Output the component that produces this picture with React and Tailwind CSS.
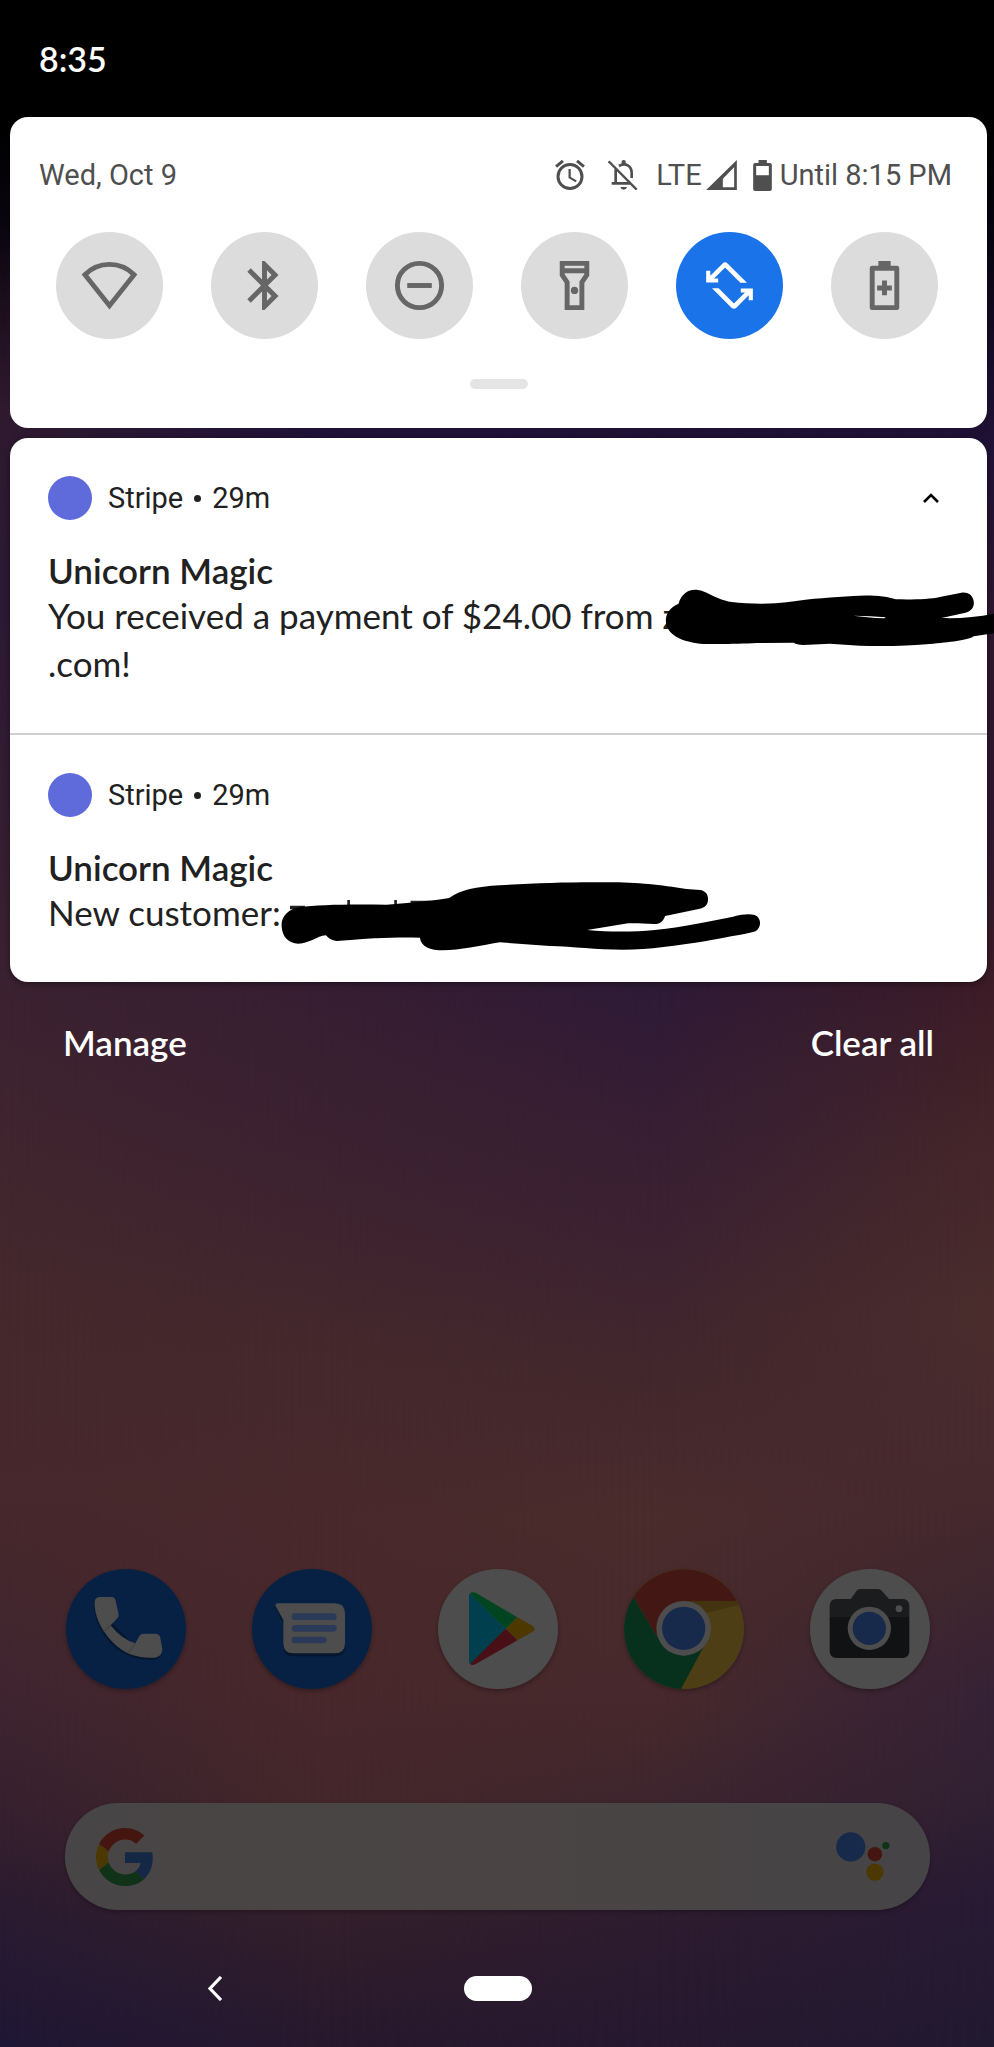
import React from "react";

const sans = "font-['Lato','Open_Sans',sans-serif]";

function Wallpaper() {
  return (
    <div aria-hidden="true" className="absolute inset-0 -z-10 bg-black">
      <div className="absolute inset-0 bg-[linear-gradient(to_bottom,#000_6%,#0a0610_11%,#1d0f1e_15%,#2f1a2f_20%,#2c1a34_29%,#321d32_38%,#3c2230_49%,#44282d_63%,#47292c_73%,#402530_82%,#37212e_88%,#2b1b30_93%,#1e1735_100%)]" />
      <div className="absolute inset-0 bg-[linear-gradient(to_bottom,#000_6%,#0a0612_11%,#1a0f24_15%,#1f1138_21%,#281636_38%,#371e32_49%,#3f242f_60%,#45292c_67%,#49292b_74%,#48282b_83%,#44272a_88%,#34202b_93%,#27182d_100%)] [mask-image:linear-gradient(to_right,transparent,black_33%)]" />
      <div className="absolute inset-0 bg-[linear-gradient(to_bottom,#000_6%,#0a0612_11%,#1a0f24_15%,#1f1136_21%,#26153a_38%,#2f1b36_49%,#3a2032_58%,#42272d_67%,#4a2c2c_74%,#47292c_83%,#3e252e_88%,#2e1c2f_93%,#26182f_100%)] [mask-image:linear-gradient(to_right,transparent_33%,black_66%)]" />
      <div className="absolute inset-0 bg-[linear-gradient(to_bottom,#000_6%,#05030c_11%,#150b26_17%,#201236_22%,#2f182c_32%,#2e182f_40%,#3c1b26_48%,#44262a_56%,#4a2d2c_64%,#46292e_73%,#3e262f_78%,#352236_83%,#302032_88%,#281a33_93%,#211a30_100%)] [mask-image:linear-gradient(to_right,transparent_66%,black)]" />
    </div>
  );
}

function AlarmIcon() {
  return (
    <svg viewBox="0 0 24 24" className="size-9" fill="currentColor" aria-hidden="true">
      <path d="M12.5 8H11v6l4.75 2.85.75-1.23-4-2.37V8zm4.84-6.19 4.6 3.85-1.28 1.53-4.6-3.84zm-10.68 0 1.29 1.54L3.34 7.19 2.06 5.65zM12 4a9 9 0 1 0 0 18 9 9 0 0 0 0-18zm0 16a7 7 0 1 1 0-14 7 7 0 0 1 0 14z" />
    </svg>
  );
}

function BellOffIcon() {
  return (
    <svg viewBox="0 0 90 90" className="size-[30px]" aria-hidden="true">
      <g fill="none" stroke="currentColor" strokeWidth="8">
        <path d="M2 4 86 89" strokeWidth="7" />
        <path d="M23 28V70M11 70H67" />
        <path d="M33 18C52 6 71 18 71 38V54" />
      </g>
      <path d="M41 3q6-6 12 0v10H41zM37 81H57q-2 8-10 8t-10-8z" fill="currentColor" />
    </svg>
  );
}

function SignalIcon() {
  return (
    <svg viewBox="0 0 92 90" className="h-[30px] w-[31px]" aria-hidden="true">
      <path fillRule="evenodd" fill="currentColor" d="M0 90 92 0V90ZM50 82H84V22L50 56Z" />
    </svg>
  );
}

function BatteryIcon() {
  return (
    <svg viewBox="0 0 56 93" className="h-[31px] w-[19px]" aria-hidden="true">
      <path
        fillRule="evenodd"
        fill="currentColor"
        d="M16 0H41V9H50Q56 9 56 15V87Q56 93 50 93H6Q0 93 0 87V15Q0 9 6 9H16ZM9 18V46H47V18Z"
      />
    </svg>
  );
}

const rotateHalf =
  "M2.5 6H4.2V8L9.2 3Q10.2 2.1 11.2 3L19.1 10.9H16.4L10.2 4.7 5.7 9.2H7.4V10.8H2.5Z";

const tileIcons = {
  wifi: (
    <path
      d="M2 7.6A14 14 0 0 1 22 7.6L12 20.2Z"
      fill="none"
      stroke="currentColor"
      strokeWidth="2"
    />
  ),
  bluetooth: (
    <path d="M17.71 7.71 12 2h-1v7.59L6.41 5 5 6.41 10.59 12 5 17.59 6.41 19 11 14.41V22h1l5.71-5.71-4.3-4.29 4.3-4.29zM13 5.83l1.88 1.88L13 9.59V5.83zm1.88 10.46L13 18.17v-3.76l1.88 1.88z" />
  ),
  dnd: (
    <g fill="none" stroke="currentColor" strokeWidth="2">
      <circle cx="12" cy="12" r="9" />
      <path d="M7 12H17" />
    </g>
  ),
  flashlight: (
    <>
      <path d="M18 2H6v6l2 3v11h8V11l2-3V2zm-2 2v1H8V4h8zm-2 6.4V20h-4v-9.6L8 7.39V7h8v.39l-2 3.01z" />
      <circle cx="12" cy="14" r="1.5" />
    </>
  ),
  rotate: (
    <>
      <path d={rotateHalf} />
      <path transform="rotate(180 12 12)" d={rotateHalf} />
    </>
  ),
  battery: (
    <>
      <path
        fillRule="evenodd"
        d="M9.500 2H14.500V4H17Q18 4 18 5V21Q18 22 17 22H7Q6 22 6 21V5Q6 4 7 4H9.500ZM8 6V20H16V6Z"
      />
      <path d="M11 10H13V12H15V14H13V16H11V14H9V12H11Z" />
    </>
  ),
};

const tiles = [
  { id: "wifi", label: "Wi-Fi" },
  { id: "bluetooth", label: "Bluetooth" },
  { id: "dnd", label: "Do not disturb" },
  { id: "flashlight", label: "Flashlight" },
  { id: "rotate", label: "Auto-rotate", on: true },
  { id: "battery", label: "Battery saver" },
];

function QuickSettings() {
  return (
    <section className="rounded-[18px] bg-white pt-10 pb-[39px] text-[#4f4f4f]">
      <div className="flex h-9 items-center justify-between pr-[35px] pl-[29px] font-['Roboto',sans-serif] text-[29px] leading-9">
        <span>Wed, Oct 9</span>
        <div className="flex items-center">
          <AlarmIcon />
          <span className="ml-5"><BellOffIcon /></span>
          <span className="ml-[18px]">LTE</span>
          <span className="ml-1"><SignalIcon /></span>
          <span className="ml-4"><BatteryIcon /></span>
          <span className="ml-2">Until 8:15 PM</span>
        </div>
      </div>
      <div className="mt-[39px] flex justify-between pr-[49px] pl-[46px]">
        {tiles.map((t) => (
          <button
            key={t.id}
            type="button"
            aria-label={t.label}
            aria-pressed={!!t.on}
            className={
              t.on
                ? "flex size-[107px] items-center justify-center rounded-full bg-[#1a73e8] text-white"
                : "flex size-[107px] items-center justify-center rounded-full bg-[#dcdcdc] text-[#666]"
            }
          >
            <svg viewBox="0 0 24 24" className="size-[59px]" fill="currentColor" aria-hidden="true">
              {tileIcons[t.id]}
            </svg>
          </button>
        ))}
      </div>
      <div className="mx-auto mt-10 h-[10px] w-[58px] rounded-full bg-[#e4e4e4]" />
    </section>
  );
}

function Notification({ title, children, expandable }) {
  return (
    <article className="relative pt-[38px] pr-[48px] pb-[46px] pl-[38px] text-[#212121]">
      <header className="flex h-11 items-center font-['Roboto',sans-serif] text-[29px] leading-9">
        <span className="size-11 rounded-full bg-[#5f6bdb]" />
        <span className="ml-4">Stripe</span>
        <span className="mx-[11px] size-[7px] rounded-full bg-[#212121]" />
        <span>29m</span>
        {expandable && (
          <button type="button" aria-label="Collapse" className="ml-auto text-black">
            <svg viewBox="0 0 16 10" className="h-[10px] w-4" fill="none" aria-hidden="true">
              <path d="M1 9 8 2l7 7" stroke="currentColor" strokeWidth="2.6" />
            </svg>
          </button>
        )}
      </header>
      <h2 className={`${sans} mt-[29px] text-[35px] leading-[42px] font-semibold`}>{title}</h2>
      {children}
    </article>
  );
}

function PaymentScribble() {
  return (
    <svg
      viewBox="190 470 992 186"
      className="absolute top-[149px] -right-[7px] h-[62px] w-[331px]"
      aria-hidden="true"
    >
      <path d="M236 520C245 490 265 478 285 478C320 478 340 505 395 515C450 522 520 521 560 516C640 503 700 502 760 497C810 493 860 497 888 507C940 508 990 507 1020 500L1085 487C1110 485 1122 500 1122 518C1122 535 1110 545 1090 549L1025 563C1080 565 1130 560 1182 550V609L1122 618C1110 628 1060 635 1000 640C920 647 850 649 780 646L690 640L610 644Q590 643 582 637L470 638C420 641 340 642 300 640C250 635 198 615 198 570C198 545 215 530 236 520Z" />
      <path d="M760 556Q810 557 858 561L854 564Q800 561 760 556Z" fill="#fff" />
    </svg>
  );
}

function CustomerScribble() {
  return (
    <svg
      viewBox="840 450 1450 216"
      className="absolute top-[145px] left-[270px] h-[72px] w-[483px]"
      aria-hidden="true"
    >
      <path
        d="M870 527H915V538H870ZM1042 510H1050V530H1042ZM1183 510H1191V530H1183ZM1232 512H1290V520H1232Z"
        fill="#212121"
      />
      <path d="M845 590C842 560 865 537 900 531C950 524 1050 522 1160 524C1230 519 1300 512 1348 504C1380 480 1430 470 1500 466C1600 459 1720 456 1820 457C1920 457 1980 465 2060 477L2102 480C2120 484 2125 495 2125 508C2125 525 2115 534 2097 537L1996 558C1990 575 1980 583 1962 582C1930 580 1905 579 1885 580L1762 600C1830 606 1900 606 1965 600C2060 590 2130 573 2200 560C2230 552 2250 551 2265 555C2285 562 2287 590 2268 604C2240 612 2200 618 2120 633C2030 647 1950 659 1870 659C1790 659 1720 650 1650 648L1500 637C1440 647 1380 661 1330 661C1290 661 1264 650 1260 623C1200 621 1120 623 1010 633C995 631 985 625 978 616C950 618 930 641 895 641C865 640 847 620 845 590Z" />
    </svg>
  );
}

const apps = [
  {
    name: "Phone",
    art: (
      <>
        <circle cx="180" cy="180" r="180" fill="#062144" />
        <path d="M84 110 90 150Q140 276 262 273 286 270 288 246L208 230Z" fill="#04172f" />
        <path d="M86 98Q88 84 102 84H138Q146 84 148 92L158 136Q159 142 155 146L134 169Q166 210 208 223L222 199Q225 194 231 194H270Q281 195 283 207L289 241Q289 262 268 266Q190 272 140 220Q84 160 86 98Z" fill="#4d4d4d" />
        <path d="M113 187 134 169M187 253 208 223" stroke="#444" strokeWidth="5" />
      </>
    ),
  },
  {
    name: "Messages",
    art: (
      <>
        <circle cx="180" cy="180" r="180" fill="#062144" />
        <path d="M70 112 94 164V232Q94 262 124 262H250Q279 262 279 234V140Z" fill="#04172f" />
        <path d="M78 103H248Q279 103 279 134V222Q279 253 248 253H124Q94 253 94 222V153L71 112Q68 104 78 103Z" fill="#4d4d4d" />
        <g stroke="#2b3a58" strokeWidth="20" strokeLinecap="round">
          <path d="M129 143H244M129 178H244M129 213H214" />
        </g>
      </>
    ),
  },
  {
    name: "Play Store",
    art: (
      <>
        <circle cx="180" cy="180" r="180" fill="#4d4d4d" />
        <path d="M93 78Q93 74 98 74L203 179 98 286Q93 284 93 278Z" fill="#00404e" />
        <path d="M96 73Q103 67 113 71L238 145 203 179Z" fill="#00451f" />
        <path d="M238 145 283 170Q298 180 283 189L238 214 203 179Z" fill="#4d3900" />
        <path d="M203 179 238 214 112 286Q102 291 96 285Z" fill="#490f17" />
      </>
    ),
  },
  {
    name: "Chrome",
    art: (
      <>
        <circle cx="180" cy="180" r="180" fill="#4d3e16" />
        <path d="M28 84 98 200 180 262 245 222 171 360A180 180 0 0 1 28 84Z" fill="#08311d" />
        <path d="M28 84A180 180 0 0 1 339 97H179L98 200Z" fill="#431814" />
        <path d="M179 97H339L343 108 245 132Z" fill="#44330f" />
        <circle cx="179" cy="178" r="82" fill="#4d4d4d" />
        <circle cx="179" cy="178" r="65" fill="#172a4c" />
      </>
    ),
  },
  {
    name: "Camera",
    art: (
      <>
        <circle cx="180" cy="180" r="180" fill="#4d4d4d" />
        <path d="M59 144V110Q60 91 79 90H122L140 65Q144 60 151 60H205Q211 60 215 65L237 90H278Q297 91 298 110V144Z" fill="#1b1c1d" />
        <path d="M59 144H298V247Q297 266 278 267H79Q60 266 59 247Z" fill="#111213" />
        <circle cx="267" cy="119" r="10" fill="#4d4d4d" />
        <circle cx="178" cy="178" r="65" fill="#4d4d4d" />
        <circle cx="178" cy="178" r="50" fill="#172a4c" />
      </>
    ),
  },
];

function Dock() {
  return (
    <nav aria-label="Apps" className="mt-auto flex justify-between pr-16 pl-[66px]">
      {apps.map((a) => (
        <a key={a.name} href="#" aria-label={a.name} className="size-[120px] rounded-full shadow-[0_2px_4px_rgba(0,0,0,0.3)]">
          <svg viewBox="0 0 360 360" className="size-full" fill="none" aria-hidden="true">
            {a.art}
          </svg>
        </a>
      ))}
    </nav>
  );
}

function SearchBar() {
  return (
    <form
      onSubmit={(e) => e.preventDefault()}
      className="mt-[114px] mr-16 ml-[65px] flex h-[107px] items-center rounded-full bg-[linear-gradient(to_right,#484546,#4a4544_50%,#464446)] pr-10 pl-[31px] shadow-[0_2px_4px_rgba(0,0,0,0.25)]"
    >
      <svg viewBox="0 0 48 48" className="size-[58px]" aria-hidden="true">
        <path fill="#451510" d="M24 9.5c3.54 0 6.71 1.22 9.21 3.6l6.85-6.85C35.9 2.38 30.47 0 24 0 14.62 0 6.51 5.38 2.56 13.22l7.98 6.19C12.43 13.72 17.74 9.5 24 9.5z" />
        <path fill="#142846" d="M46.98 24.55c0-1.57-.15-3.09-.38-4.55H24v9.02h12.94c-.58 2.96-2.26 5.48-4.78 7.18l7.73 6c4.51-4.18 7.09-10.36 7.09-17.65z" />
        <path fill="#4b3802" d="M10.53 28.59c-.48-1.45-.76-2.99-.76-4.59s.27-3.14.76-4.59l-7.98-6.19C.92 16.46 0 20.12 0 24c0 3.88.92 7.54 2.56 10.78l7.97-6.19z" />
        <path fill="#103218" d="M24 48c6.48 0 11.93-2.13 15.89-5.81l-7.73-6c-2.15 1.45-4.92 2.3-8.16 2.3-6.26 0-11.57-4.22-13.47-9.91l-7.98 6.19C6.51 42.62 14.62 48 24 48z" />
      </svg>
      <input
        type="text"
        aria-label="Search"
        className="h-full min-w-0 flex-1 bg-transparent px-4 text-[29px] text-white outline-none"
      />
      <button type="button" aria-label="Assistant">
        <svg viewBox="0 0 160 148" className="h-[49px] w-[54px]" aria-hidden="true">
          <circle cx="43" cy="45" r="44" fill="#172a4c" />
          <circle cx="116" cy="67" r="22" fill="#451510" />
          <circle cx="149" cy="41" r="11" fill="#103218" />
          <circle cx="116" cy="121" r="26" fill="#4b3802" />
        </svg>
      </button>
    </form>
  );
}

export default function App() {
  return (
    <div className="relative isolate flex min-h-screen w-full flex-col overflow-hidden">
      <Wallpaper />
      <header className={`${sans} flex h-[117px] items-center pl-[39px] text-[34px] font-semibold text-white`}>
        8:35
      </header>
      <main className="flex flex-col gap-[10px] pr-[7px] pl-[10px]">
        <QuickSettings />
        <section className="rounded-[18px] bg-white shadow-[0_2px_6px_rgba(0,0,0,0.4)]">
          <Notification title="Unicorn Magic" expandable>
            <p className={`${sans} text-[35px] leading-[48px]`}>
              You received a payment of $24.00 from z
              <br />
              .com!
            </p>
            <PaymentScribble />
          </Notification>
          <hr className="border-t-2 border-[#cfcfcf]" />
          <Notification title="Unicorn Magic">
            <p className={`${sans} text-[35px] leading-[48px]`}>New customer:</p>
            <CustomerScribble />
          </Notification>
        </section>
      </main>
      <div className={`${sans} mt-9 flex justify-between pr-[60px] pl-[63px] text-[35px] leading-[48px] font-semibold text-white`}>
        <button type="button">Manage</button>
        <button type="button">Clear all</button>
      </div>
      <Dock />
      <SearchBar />
      <nav aria-label="System" className="mt-[66px] grid grid-cols-3 items-center pr-16 pb-[46px] pl-[66px]">
        <button type="button" aria-label="Back" className="ml-[141px] w-4 text-white">
          <svg viewBox="0 0 16 25" className="h-[25px] w-4" fill="none" aria-hidden="true">
            <path d="M14 1 3 12.500 14 24" stroke="currentColor" strokeWidth="3.200" />
          </svg>
        </button>
        <button type="button" aria-label="Home" className="mx-auto h-[25px] w-[68px] rounded-full bg-white" />
      </nav>
    </div>
  );
}
